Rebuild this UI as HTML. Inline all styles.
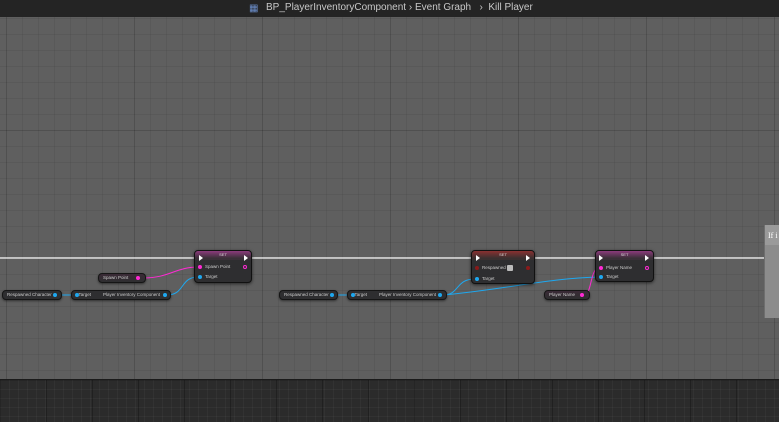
<!DOCTYPE html>
<html><head><meta charset="utf-8"><style>
*{margin:0;padding:0;box-sizing:border-box}
body{width:779px;height:422px;overflow:hidden;position:relative;font-family:"Liberation Sans",sans-serif;
background-color:#5f5f5f;
background-image:linear-gradient(rgba(0,0,0,.1) 1px,transparent 1px),linear-gradient(90deg,rgba(0,0,0,.1) 1px,transparent 1px),linear-gradient(rgba(0,0,0,.06) 1px,transparent 1px),linear-gradient(90deg,rgba(0,0,0,.06) 1px,transparent 1px);
background-size:128px 128px,128px 128px,16px 16px,16px 16px;background-position:0 2px,6px 0,0 2px,6px 0}
#top{position:absolute;left:0;top:0;width:779px;height:17px;background:#242424;color:#c8c8c8;font-size:10px;line-height:16px}
#bot{position:absolute;left:0;top:379px;width:779px;height:43px;background-color:#2b2b2b;
background-image:linear-gradient(rgba(0,0,0,.25) 1px,transparent 1px),linear-gradient(90deg,rgba(0,0,0,.25) 1px,transparent 1px),linear-gradient(rgba(255,255,255,.035) 1px,transparent 1px),linear-gradient(90deg,rgba(255,255,255,.035) 1px,transparent 1px);
background-size:46px 46px,46px 46px,9px 9px,9px 9px;border-top:1px solid #1a1a1a}
.node{position:absolute;background:#2e2e30;border:1px solid #111;border-radius:4px;box-shadow:0 1px 3px rgba(0,0,0,.6)}
.hdr{height:9px;border-radius:3px 3px 0 0;background:linear-gradient(#8c3a7c,#3a3038 80%);color:#ddd;font-size:4px;text-align:center;line-height:8px}
.hdr.r{background:linear-gradient(#8a3030,#3a3030 80%)}
.pill{position:absolute;height:10px;background:#2e2e30;border:1px solid #151515;border-radius:4px;color:#ccc;font-size:4.5px;line-height:8px;padding:0 4px;box-shadow:0 1px 2px rgba(0,0,0,.5)}
.pin{position:absolute;width:4px;height:4px;border-radius:50%}
.m{background:#ff2ad4}.b{background:#1ea8f0}.d{background:#8a1a1a}
.t{position:absolute;color:#ccc;font-size:4.5px}
.ex{position:absolute;width:0;height:0;border-top:3px solid transparent;border-bottom:3px solid transparent;border-left:4px solid #fff}
</style></head><body>
<div id="top"><span style="position:absolute;left:249px;top:1px;color:#6a8cc8;font-size:10px">▦</span><span style="position:absolute;left:266px">BP_PlayerInventoryComponent › Event Graph &nbsp;&nbsp;›&nbsp; Kill Player</span></div>

<svg width="779" height="422" style="position:absolute;left:0;top:0">
<line x1="0" y1="258" x2="764" y2="258" stroke="#fff" stroke-width="1.3"/>
<path d="M143 278 C170 278,175 267,199 267" stroke="#ff2ad4" fill="none" stroke-width="1"/>
<path d="M167 295 C185 295,180 277,198 277" stroke="#1ea8f0" fill="none" stroke-width="1"/>
<path d="M60 295 L72 295" stroke="#1ea8f0" fill="none" stroke-width="1"/>
<path d="M336 295 L348 295" stroke="#1ea8f0" fill="none" stroke-width="1"/>
<path d="M443 295 C460 295,455 279,475 279" stroke="#1ea8f0" fill="none" stroke-width="1"/>
<path d="M443 295 C500 290,550 278,599 277" stroke="#1ea8f0" fill="none" stroke-width="1"/>
<path d="M584 295 C592 295,590 268,599 268" stroke="#ff2ad4" fill="none" stroke-width="1"/>
</svg>

<div class="node" style="left:194px;top:250px;width:58px;height:33px"><div class="hdr">SET</div></div>
<div class="ex" style="left:199px;top:255px"></div><div class="ex" style="left:244px;top:255px"></div>
<div class="pin m" style="left:198px;top:265px"></div><div class="t" style="left:205px;top:264px">Spawn Point</div>
<div class="pin" style="left:243px;top:265px;border:1px solid #ff2ad4"></div>
<div class="pin b" style="left:198px;top:275px"></div><div class="t" style="left:205px;top:274px">Target</div>

<div class="node" style="left:471px;top:250px;width:64px;height:34px"><div class="hdr r">SET</div></div>
<div class="ex" style="left:476px;top:255px"></div><div class="ex" style="left:526px;top:255px"></div>
<div class="pin d" style="left:475px;top:266px"></div><div class="t" style="left:482px;top:265px">Respawned</div>
<div style="position:absolute;left:507px;top:265px;width:6px;height:6px;background:#bbb;border-radius:1px"></div>
<div class="pin d" style="left:526px;top:266px"></div>
<div class="pin b" style="left:475px;top:277px"></div><div class="t" style="left:482px;top:276px">Target</div>

<div class="node" style="left:595px;top:250px;width:59px;height:32px"><div class="hdr">SET</div></div>
<div class="ex" style="left:599px;top:255px"></div><div class="ex" style="left:645px;top:255px"></div>
<div class="pin m" style="left:599px;top:266px"></div><div class="t" style="left:606px;top:265px">Player Name</div>
<div class="pin" style="left:645px;top:266px;border:1px solid #ff2ad4"></div>
<div class="pin b" style="left:599px;top:275px"></div><div class="t" style="left:606px;top:274px">Target</div>

<div class="pill" style="left:98px;top:273px;width:48px;background:linear-gradient(#3a2a36,#2e2e30)">Spawn Point</div><div class="pin m" style="left:136px;top:276px"></div>
<div class="pill" style="left:2px;top:290px;width:60px">Respawned Character</div><div class="pin b" style="left:53px;top:293px"></div>
<div class="pill" style="left:71px;top:290px;width:100px"><span>&nbsp;&nbsp;Target</span><span style="position:absolute;right:10px">Player Inventory Component</span></div><div class="pin b" style="left:75px;top:293px"></div><div class="pin b" style="left:163px;top:293px"></div>
<div class="pill" style="left:279px;top:290px;width:59px">Respawned Character</div><div class="pin b" style="left:330px;top:293px"></div>
<div class="pill" style="left:347px;top:290px;width:100px"><span>&nbsp;&nbsp;Target</span><span style="position:absolute;right:10px">Player Inventory Component</span></div><div class="pin b" style="left:351px;top:293px"></div><div class="pin b" style="left:438px;top:293px"></div>
<div class="pill" style="left:544px;top:290px;width:46px;background:linear-gradient(#3a2a36,#2e2e30)">Player Name</div><div class="pin m" style="left:580px;top:293px"></div>

<div style="position:absolute;left:764px;top:225px;width:15px;height:93px;background:#8c8c8c;border-left:1px solid #6e6e6e"><div style="height:20px;background:#9a9a9a;color:#fff;font-size:8px;padding:6px 0 0 3px;font-family:'Liberation Serif',serif">If i</div></div>

<div id="bot"></div>
</body></html>
